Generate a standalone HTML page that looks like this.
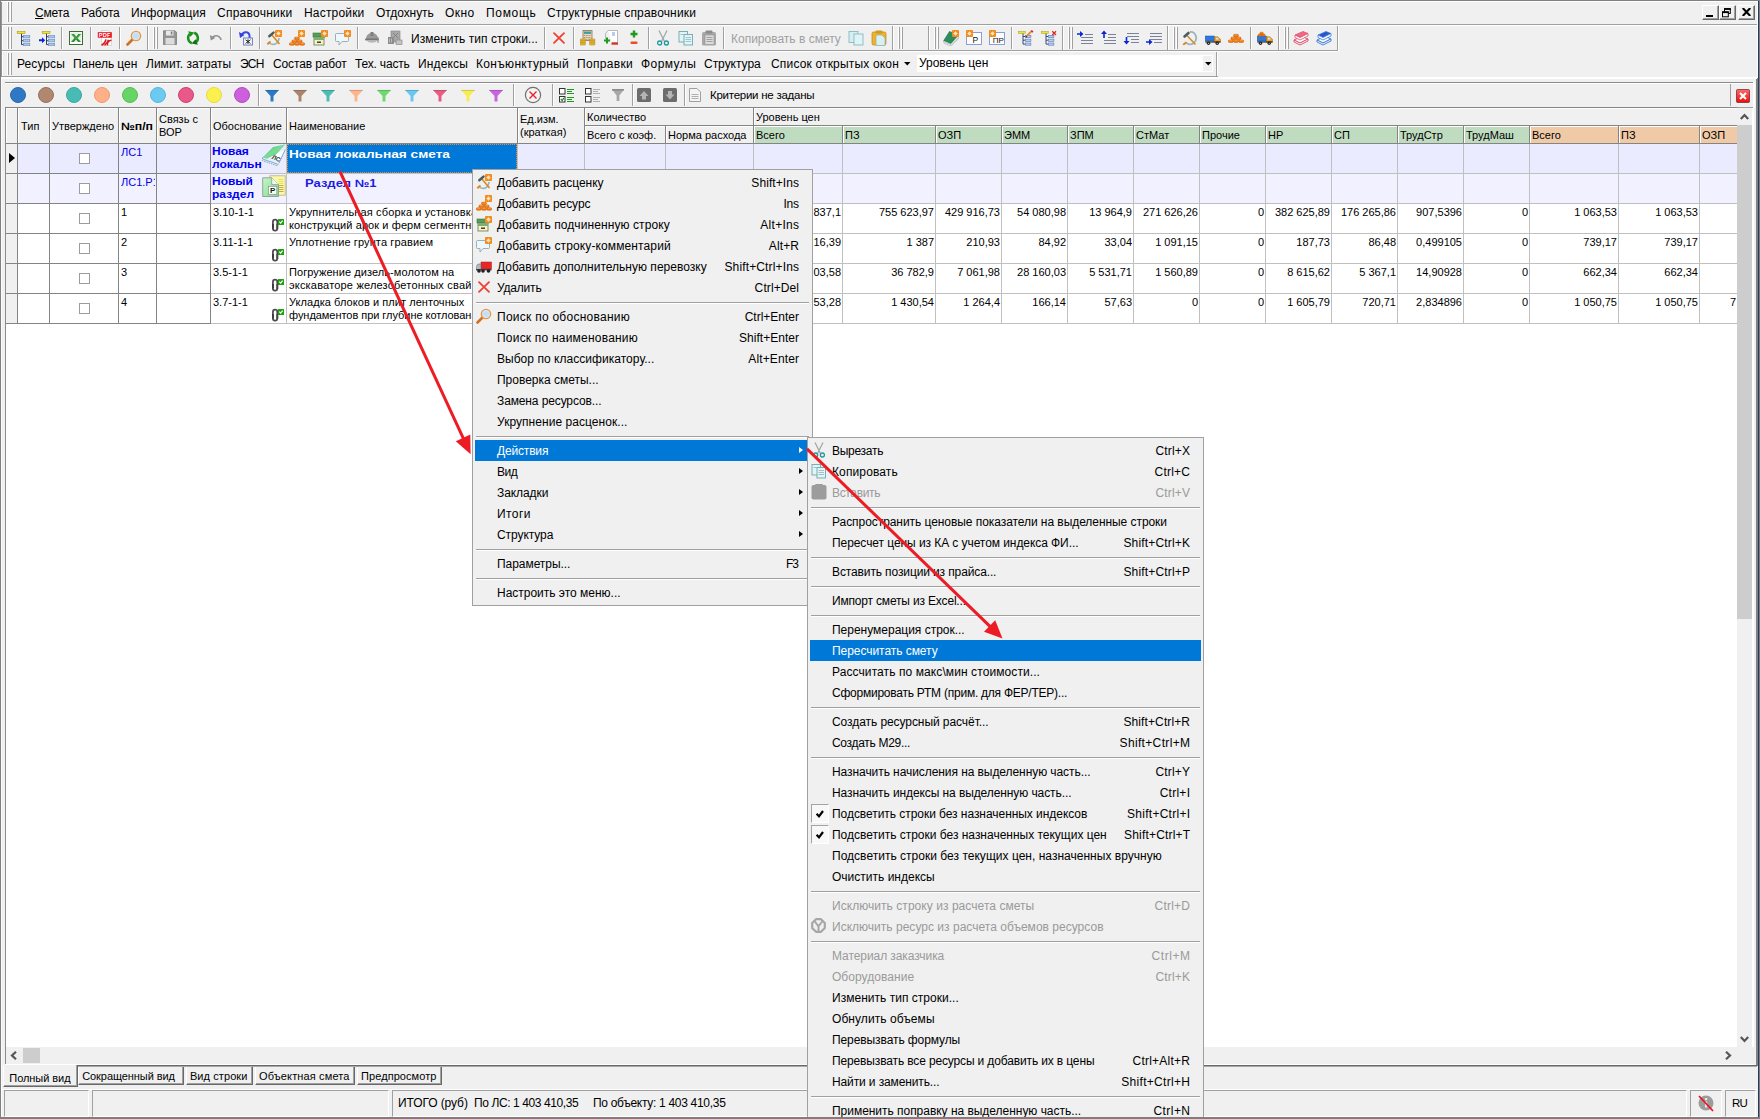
<!DOCTYPE html>
<html lang="ru"><head><meta charset="utf-8"><title>Smeta</title><style>
*{box-sizing:border-box;margin:0;padding:0}
html,body{width:1760px;height:1119px;overflow:hidden;background:#f0f0f0}
body{font-family:"Liberation Sans",sans-serif;font-size:12px;color:#000;position:relative}
.a{position:absolute}
.t{position:absolute;white-space:pre;line-height:14px;font-size:12px}
.g{position:absolute;white-space:pre;line-height:13px;font-size:11px}
.ic{position:absolute;width:16px;height:16px}
.ic svg{display:block}
.grip{position:absolute;width:2px;border-left:1px solid #fff;border-right:1px solid #a0a0a0}
.vsep{position:absolute;width:2px;height:22px;border-left:1px solid #a0a0a0;border-right:1px solid #fff}
.hl{position:absolute;height:1px;background:#a0a0a0}
.vl{position:absolute;width:1px;background:#a0a0a0}
.wbtn{position:absolute;top:5px;width:16px;height:15px;background:#f0f0f0;border:1px solid;border-color:#fff #696969 #696969 #fff;box-shadow:inset -1px -1px 0 #a0a0a0}
.menu{position:absolute;background:#f0f0f0;border:1px solid #a0a0a0}
.mi{position:absolute;left:2px;right:2px;height:21px}
.mi .l{position:absolute;left:22px;top:4px;font-size:12px;line-height:15px;white-space:pre}
.mi .s{position:absolute;right:11px;top:4px;font-size:12px;line-height:15px;white-space:pre}
.mi.sel{background:#0078d7;color:#fff}
.mi.dis{color:#9a9a9a}
.mi .ic{left:1px;top:2px}
.msep{position:absolute;left:3px;right:3px;height:2px;background:#a0a0a0;border-bottom:1px solid #fff}
.arr{position:absolute;right:7px;top:7px;width:0;height:0;border:3.5px solid transparent;border-left:4px solid #000;border-right:0}
.cb{position:absolute;width:11px;height:11px;background:#fff;border:1px solid #9c9c9c}
.num{position:absolute;white-space:pre;line-height:13px;font-size:11px;text-align:right}
.tab{position:absolute;font-size:11px;line-height:13px;text-align:center;border-style:solid;border-width:0 1px 1px 1px;border-color:#696969 #696969 #696969 #fff;box-shadow:inset -1px -1px 0 #a0a0a0;white-space:pre;background:#f0f0f0}
.sp{position:absolute;top:1090px;height:27px;border:1px solid;border-color:#a0a0a0 #fff #fff #a0a0a0}
</style></head><body>
<div class="a" style="left:0;top:0;width:1px;height:1119px;background:#808080"></div><div class="a" style="left:1px;top:0;width:1px;height:1119px;background:#fbfbfb"></div><div class="a" style="left:1px;top:0;width:1px;height:77px;background:#949494"></div><div class="a" style="left:2px;top:25px;width:1px;height:52px;background:#fff"></div><div class="a" style="left:1758px;top:0;width:1px;height:1119px;background:#1f3d66"></div><div class="a" style="left:1759px;top:0;width:1px;height:1119px;background:#7c7c7c"></div><div class="a" style="left:1757px;top:0;width:1px;height:78px;background:#fff"></div><div class="a" style="left:1756px;top:78px;width:2px;height:988px;background:#828282"></div><div class="a" style="left:0;top:0;width:1760px;height:1px;background:#808080"></div><div class="a" style="left:1px;top:1px;width:1757px;height:1px;background:#fff"></div><div class="grip" style="left:7px;top:2px;height:20px"></div><div class="grip" style="left:10px;top:2px;height:20px"></div><div class="t" style="left:35px;top:6px;letter-spacing:-0.23px"><u>С</u>мета</div><div class="t" style="left:81px;top:6px;letter-spacing:-0.16px">Работа</div><div class="t" style="left:131px;top:6px;letter-spacing:0.15px">Информация</div><div class="t" style="left:217px;top:6px;letter-spacing:0.26px">Справочники</div><div class="t" style="left:304px;top:6px;letter-spacing:0.18px">Настройки</div><div class="t" style="left:376px;top:6px;letter-spacing:-0.07px">Отдохнуть</div><div class="t" style="left:445px;top:6px;letter-spacing:0.47px">Окно</div><div class="t" style="left:486px;top:6px;letter-spacing:0.69px">Помощь</div><div class="t" style="left:547px;top:6px;letter-spacing:0.15px">Структурные справочники</div><div class="hl" style="left:2px;top:24px;width:1755px"></div><div class="wbtn" style="left:1702px;width:17px"><div class="a" style="left:3px;top:9px;width:7px;height:2px;background:#000"></div></div><div class="wbtn" style="left:1719px;width:17px"><svg class="a" style="left:1px;top:2px" width="11" height="10" viewBox="0 0 11 10"><rect x="3.500" y=".800" width="5.800" height="4.600" fill="none" stroke="#000" stroke-width="1"/><path d="M3 1h6.800" stroke="#000" stroke-width="1.800"/><rect x="1.500" y="4" width="5.800" height="4.800" fill="#f0f0f0" stroke="#000" stroke-width="1"/><path d="M1 4.200h6.800" stroke="#000" stroke-width="1.800"/></svg></div><div class="wbtn" style="left:1738px;width:17px"><svg class="a" style="left:3px;top:2px" width="9" height="8" viewBox="0 0 9 8"><path d="M.700 0l7.600 8M8.300 0L.700 8" stroke="#000" stroke-width="2.100"/></svg></div><div class="hl" style="left:2px;top:25px;width:1755px;background:#fff"></div><div class="grip" style="left:7px;top:27px;height:22px"></div><div class="grip" style="left:10px;top:27px;height:22px"></div><div class="ic" style="left:16px;top:30px"><svg width="16" height="16" viewBox="0 0 16 16"><rect x="1.200" y="1.300" width="7.800" height="2.300" fill="#f2e428" stroke="#a89c28" stroke-width=".6"/><path d="M5.500 3.800v10.800h2M5.500 6.700h2M5.500 10.700h2" stroke="#2a3c6c" stroke-width="1" fill="none"/><rect x="7.5" y="5.5" width="6.300" height="2.400" fill="#a8c8f0" stroke="#6a88b8" stroke-width=".6"/><rect x="7.5" y="9.5" width="6.300" height="2.400" fill="#a8c8f0" stroke="#6a88b8" stroke-width=".6"/><rect x="7.5" y="13.4" width="6.300" height="2.400" fill="#a8c8f0" stroke="#6a88b8" stroke-width=".6"/></svg></div><div class="ic" style="left:39px;top:30px"><svg width="16" height="16" viewBox="0 0 16 16"><rect x="3.200" y="1.300" width="7.800" height="2.300" fill="#f2e428" stroke="#a89c28" stroke-width=".6"/><path d="M7.500 3.800v10.800h2M7.500 6.700h2M7.500 10.700h2" stroke="#2a3c6c" stroke-width="1" fill="none"/><rect x="9.4" y="5.5" width="6.300" height="2.400" fill="#a8c8f0" stroke="#6a88b8" stroke-width=".6"/><rect x="9.4" y="9.5" width="6.300" height="2.400" fill="#a8c8f0" stroke="#6a88b8" stroke-width=".6"/><rect x="9.4" y="13.4" width="6.300" height="2.400" fill="#a8c8f0" stroke="#6a88b8" stroke-width=".6"/><path d="M0 9.300h3V7.300l3.200 3-3.200 3v-2H0z" fill="#0828e0"/></svg></div><div class="vsep" style="left:61px;top:27px"></div><div class="ic" style="left:68px;top:30px"><svg width="16" height="16" viewBox="0 0 16 16"><rect x="1.500" y="1.500" width="13" height="13" fill="#fff" stroke="#3c6c34" stroke-width="1"/><rect x="2.500" y="2.500" width="11" height="9.500" fill="#e4f0e0"/><path d="M3.200 4l2.800 0L8.200 6.800 10.400 4h2.800L9.600 8.200 13 12H10.200L8 9.500 5.800 12H3l3.500-3.900z" fill="#2c8c34"/><path d="M4 4.400l4.200 4.400L12.600 4" stroke="#7cc47c" stroke-width=".6" fill="none"/></svg></div><div class="vsep" style="left:90px;top:27px"></div><div class="ic" style="left:97px;top:30px"><svg width="16" height="16" viewBox="0 0 16 16"><path d="M4.500.500h6.500l3.500 3V15.500H4.500z" fill="#fff" stroke="#c4c4c4" stroke-width=".6"/><rect x=".8" y="2.200" width="14" height="5.500" fill="#e8101c"/><text x="7.800" y="6.900" font-family="Liberation Sans" font-size="5.600" font-weight="bold" fill="#fff" text-anchor="middle" letter-spacing=".3">PDF</text><path d="M4.500 15.300c2.500-1.500 4-3.500 4.500-6M7.500 15.300c2-1.300 3.300-3.300 4-5.500M10.500 15.300c-.5-2.500 1.500-5 4-5" stroke="#e01820" stroke-width="1.500" fill="none"/></svg></div><div class="vsep" style="left:119px;top:27px"></div><div class="ic" style="left:126px;top:30px"><svg width="16" height="16" viewBox="0 0 16 16"><path d="M1.5 14.5L7 9" stroke="#d07020" stroke-width="2.6" stroke-linecap="round"/><circle cx="10" cy="6" r="4.6" fill="#d8ecff" stroke="#e8963c" stroke-width="1.4"/><circle cx="10" cy="6" r="3" fill="#b8d8f8" opacity=".7"/></svg></div><div class="a" style="left:147px;top:26px;width:2px;height:25px;border-left:1px solid #a0a0a0;border-right:1px solid #fff"></div><div class="grip" style="left:153px;top:27px;height:22px"></div><div class="grip" style="left:156px;top:27px;height:22px"></div><div class="ic" style="left:162px;top:30px"><svg width="16" height="16" viewBox="0 0 16 16"><path d="M1.500.800h11.500l1.500 1.500v12.200h-13z" fill="#949494" stroke="#7c7c7c" stroke-width=".8"/><rect x="4" y=".800" width="7.500" height="4.700" fill="#e8e8e8"/><rect x="8.800" y="1.500" width="1.600" height="3" fill="#7c7c7c"/><rect x="3.500" y="8" width="9" height="6.500" fill="#dcdcdc"/></svg></div><div class="ic" style="left:185px;top:30px"><svg width="16" height="16" viewBox="0 0 16 16"><path d="M6.800 13.200A5.300 5.600 0 0 1 4.600 4" stroke="#1c901c" stroke-width="2.500" fill="none"/><path d="M3.200 1.200l6.200 1.200-4 4.400z" fill="#1c901c"/><path d="M9.200 2.800A5.300 5.600 0 0 1 11.400 12" stroke="#1c901c" stroke-width="2.500" fill="none"/><path d="M12.800 14.800l-6.200-1.200 4-4.400z" fill="#107010"/></svg></div><div class="ic" style="left:208px;top:30px"><svg width="16" height="16" viewBox="0 0 16 16"><path d="M4 8.500C6 4.800 11 4.500 13.200 9.800" stroke="#909090" stroke-width="1.700" fill="none"/><path d="M1.800 5l1 5.500 4.500-2.500z" fill="#909090"/></svg></div><div class="vsep" style="left:230px;top:27px"></div><div class="ic" style="left:237px;top:30px"><svg width="16" height="16" viewBox="0 0 16 16"><path d="M4.500 5.500C6.500 .500 13.500 1 12.500 8" stroke="#3848e8" stroke-width="2" fill="none"/><path d="M2 2l1 6 4.500-3z" fill="#3040e0"/><rect x="6.600" y="8" width="8.800" height="7" fill="#fff" stroke="#6a78c0"/><path d="M8.500 9.800l5 3.600M13.500 9.800l-5 3.600M11 9.300v4.600" stroke="#111" stroke-width=".9"/></svg></div><div class="vsep" style="left:259px;top:27px"></div><div class="ic" style="left:266px;top:30px"><svg width="16" height="16" viewBox="0 0 16 16"><path d="M3.500 13c3 2.800 9 1.500 9.500-5" stroke="#98b4bc" stroke-width="1.700" fill="none"/><path d="M1.300 14.200l3.200-2.700" stroke="#d88828" stroke-width="2"/><path d="M5.500 4.500l8 9.500" stroke="#d88828" stroke-width="1.600"/><path d="M3.300 6.200l4.200-3.600" stroke="#4c5c60" stroke-width="2.500" stroke-linecap="round"/><rect x="9" y="0" width="7" height="7" rx="1" fill="#f08a1c"/><circle cx="12.5" cy="3.5" r="1.3" fill="#fff"/><path d="M12.5 .8v5.4M9.8 3.5h5.4M10.6 1.6l3.8 3.8M14.4 1.6l-3.8 3.8" stroke="#ffe0b0" stroke-width=".5"/></svg></div><div class="ic" style="left:289px;top:30px"><svg width="16" height="16" viewBox="0 0 16 16"><g fill="#f47c0c" stroke="#c05000" stroke-width=".45"><rect x=".3" y="12.700" width="5" height="2.600" rx="1.200"/><rect x="5.500" y="12.700" width="5" height="2.600" rx="1.200"/><rect x="10.700" y="12.700" width="5" height="2.600" rx="1.200"/><rect x="2.900" y="9.900" width="5" height="2.600" rx="1.200"/><rect x="8.100" y="9.900" width="5" height="2.600" rx="1.200"/><rect x="5.500" y="7.100" width="5" height="2.600" rx="1.200"/></g><path d="M1.300 13.400h3M6.500 13.400h3M11.700 13.400h3M3.900 10.600h3M9.100 10.600h3M6.500 7.800h3" stroke="#ffb060" stroke-width=".6"/><rect x="9" y="0" width="7" height="7" rx="1" fill="#f08a1c"/><circle cx="12.5" cy="3.5" r="1.3" fill="#fff"/><path d="M12.5 .8v5.4M9.8 3.5h5.4M10.6 1.6l3.8 3.8M14.4 1.6l-3.8 3.8" stroke="#ffe0b0" stroke-width=".5"/></svg></div><div class="ic" style="left:312px;top:30px"><svg width="16" height="16" viewBox="0 0 16 16"><rect x="1" y="3" width="12" height="4" fill="#5a9a5a" stroke="#3a7a3a" stroke-width=".6"/><rect x="2" y="7" width="10" height="8" fill="#fbf2c0" stroke="#5a7a4a" stroke-width=".8"/><rect x="2" y="7" width="10" height="3" fill="#78b078"/><rect x="5" y="11.5" width="4" height="1.4" fill="#333"/><rect x="9" y="0" width="7" height="7" rx="1" fill="#f08a1c"/><circle cx="12.5" cy="3.5" r="1.3" fill="#fff"/><path d="M12.5 .8v5.4M9.8 3.5h5.4M10.6 1.6l3.8 3.8M14.4 1.6l-3.8 3.8" stroke="#ffe0b0" stroke-width=".5"/></svg></div><div class="ic" style="left:335px;top:30px"><svg width="16" height="16" viewBox="0 0 16 16"><path d="M1.5 3.5h11a1 1 0 0 1 1 1v6a1 1 0 0 1-1 1H7l-3 3.5v-3.5H1.5a1 1 0 0 1-1-1v-6a1 1 0 0 1 1-1z" fill="#eef8fc" stroke="#90a8b0" stroke-width=".9"/><rect x="9" y="0" width="7" height="7" rx="1" fill="#f08a1c"/><circle cx="12.5" cy="3.5" r="1.3" fill="#fff"/><path d="M12.5 .8v5.4M9.8 3.5h5.4M10.6 1.6l3.8 3.8M14.4 1.6l-3.8 3.8" stroke="#ffe0b0" stroke-width=".5"/></svg></div><div class="vsep" style="left:357px;top:27px"></div><div class="ic" style="left:364px;top:30px"><svg width="16" height="16" viewBox="0 0 16 16"><path d="M2 9c0-4 3-6 6-6s6 2 6 6z" fill="#9a9a9a"/><rect x="1" y="8.5" width="14" height="2" rx="1" fill="#777"/><path d="M3 10.5c1 3 9 3 10 0" fill="#b8b8b8"/><rect x="6.5" y="2" width="3" height="4" fill="#808080"/><path d="M14 7v6" stroke="#888"/></svg></div><div class="ic" style="left:387px;top:30px"><svg width="16" height="16" viewBox="0 0 16 16"><rect x="4" y="1" width="9" height="11" fill="#a8a8a8" stroke="#808080" stroke-width=".6"/><path d="M6 3l5 5M11 3l-5 5" stroke="#7a7a7a" stroke-width=".8"/><rect x="1" y="7" width="6" height="7" fill="#8c8c8c"/><rect x="9" y="10" width="6" height="4.5" fill="#c4c4c4" stroke="#808080" stroke-width=".6"/><path d="M2.5 8.5v4M4.5 8.5v4" stroke="#c8c8c8" stroke-width=".8"/></svg></div><div class="t" style="left:411px;top:32px;letter-spacing:0.03px">Изменить тип строки...</div><div class="vsep" style="left:544px;top:27px"></div><div class="ic" style="left:551px;top:30px"><svg width="16" height="16" viewBox="0 0 16 16"><path d="M3 3.200l10 9.600M13 3.200L3 12.800" stroke="#f04030" stroke-width="1.800" stroke-linecap="round"/></svg></div><div class="vsep" style="left:573px;top:27px"></div><div class="ic" style="left:580px;top:30px"><svg width="16" height="16" viewBox="0 0 16 16"><rect x="3" y="0.5" width="9" height="10" fill="#e8d8c0" stroke="#806040" stroke-width=".7"/><rect x="4" y="1.5" width="7" height="2.4" fill="#38a0a0"/><path d="M4 5.5h7M4 7.5h7M4 9.3h7" stroke="#a08060" stroke-width=".8" stroke-dasharray="1.4 .8"/><g fill="#f0c030" stroke="#a07810" stroke-width=".5"><rect x="0" y="9" width="5.5" height="2" rx=".8"/><rect x="0" y="11" width="5.5" height="2" rx=".8"/><rect x="0" y="13" width="5.5" height="2" rx=".8"/><rect x="9.5" y="9" width="5.5" height="2" rx=".8"/><rect x="9.5" y="11" width="5.5" height="2" rx=".8"/><rect x="9.5" y="13" width="5.5" height="2" rx=".8"/></g></svg></div><div class="ic" style="left:603px;top:30px"><svg width="16" height="16" viewBox="0 0 16 16"><path d="M5 .5h9.5v12H9" fill="#fff" stroke="#a8a8a8" stroke-width=".8"/><path d="M5 .5L2.5 3.5V9" fill="none" stroke="#a8a8a8" stroke-width=".8"/><path d="M9 3h3M9 5h3" stroke="#6a8ad0" stroke-width=".9"/><path d="M1 10.5h6M4 7.5v6" stroke="#1e9a1e" stroke-width="2"/><rect x="8.5" y="12.5" width="6.5" height="2.2" fill="#e03020"/></svg></div><div class="ic" style="left:626px;top:30px"><svg width="16" height="16" viewBox="0 0 16 16"><path d="M4.5 4h7M8 .5v7" stroke="#1e9a1e" stroke-width="2.4"/><rect x="4.5" y="11.5" width="7" height="2.6" rx="1" fill="#f04828"/></svg></div><div class="vsep" style="left:648px;top:27px"></div><div class="ic" style="left:655px;top:30px"><svg width="16" height="16" viewBox="0 0 16 16"><path d="M4 .5l5.5 11M12 .5L6.5 11.5" stroke="#a0a8a8" stroke-width="1.3"/><circle cx="4.6" cy="13" r="2" fill="none" stroke="#1a9aa0" stroke-width="1.3"/><circle cx="11.4" cy="13" r="2" fill="none" stroke="#1a9aa0" stroke-width="1.3"/></svg></div><div class="ic" style="left:678px;top:30px"><svg width="16" height="16" viewBox="0 0 16 16"><rect x="1" y="1.5" width="8.5" height="10.5" fill="#e4f4f6" stroke="#6aa8b0" stroke-width=".9"/><rect x="6" y="4.5" width="8.5" height="10.5" fill="#e4f4f6" stroke="#6aa8b0" stroke-width=".9"/><path d="M7.5 7.5h5.5M7.5 9.5h5.5M7.5 11.5h5.5M2.5 4.5h3" stroke="#8ab8c0" stroke-width=".8"/></svg></div><div class="ic" style="left:701px;top:30px"><svg width="16" height="16" viewBox="0 0 16 16"><rect x="1" y="2" width="14" height="13.5" rx="1.5" fill="#a8a8a8"/><rect x="4.5" y=".5" width="7" height="3" rx="1" fill="#8c8c8c"/><rect x="4" y="5" width="9" height="9.5" fill="#dcdcdc" stroke="#909090" stroke-width=".6"/><path d="M5.5 7.5h6M5.5 9.5h6M5.5 11.5h6" stroke="#909090" stroke-width=".8"/></svg></div><div class="vsep" style="left:723px;top:27px"></div><div class="t" style="left:731px;top:32px;color:#a0a0a0;letter-spacing:-0.0px">Копировать в смету</div><div class="ic" style="left:848px;top:30px"><svg width="16" height="16" viewBox="0 0 16 16"><rect x="1" y="1.5" width="9" height="11" fill="#d4eef2" stroke="#88b8c0" stroke-width=".9"/><rect x="6" y="4" width="9" height="11" fill="#e0f4f6" stroke="#88b8c0" stroke-width=".9"/></svg></div><div class="ic" style="left:871px;top:30px"><svg width="16" height="16" viewBox="0 0 16 16"><rect x="1" y="2" width="14" height="13" rx="1.5" fill="#f0b428" stroke="#c08810" stroke-width=".7"/><rect x="4.5" y=".5" width="7" height="3" rx="1" fill="#d89818"/><path d="M5 5h6l3 3v7.5H5z" fill="#d8f0f2" stroke="#88b0b8" stroke-width=".7"/></svg></div><div class="a" style="left:892px;top:26px;width:2px;height:25px;border-left:1px solid #a0a0a0;border-right:1px solid #fff"></div><div class="grip" style="left:898px;top:27px;height:22px"></div><div class="grip" style="left:901px;top:27px;height:22px"></div><div class="a" style="left:928px;top:26px;width:2px;height:25px;border-left:1px solid #a0a0a0;border-right:1px solid #fff"></div><div class="grip" style="left:934px;top:27px;height:22px"></div><div class="grip" style="left:937px;top:27px;height:22px"></div><div class="ic" style="left:943px;top:30px"><svg width="16" height="16" viewBox="0 0 16 16"><path d="M.800 10.500v2.500l7 3 7.500-7V6.500z" fill="#e8ecec" stroke="#98a8a8" stroke-width=".6"/><path d="M.800 10.500L6.500 1.500l8.800 3.500-7.500 8.500z" fill="#2c8c5c" stroke="#1c6c44" stroke-width=".6"/><path d="M1.500 11.800l6.300 2.700 7-6.500" stroke="#b0bcbc" stroke-width=".7" fill="none"/><rect x="9" y="0" width="7" height="7" rx="1" fill="#f08a1c"/><circle cx="12.5" cy="3.5" r="1.3" fill="#fff"/><path d="M12.5 .8v5.4M9.8 3.5h5.4M10.6 1.6l3.8 3.8M14.4 1.6l-3.8 3.8" stroke="#ffe0b0" stroke-width=".5"/></svg></div><div class="ic" style="left:966px;top:30px"><svg width="16" height="16" viewBox="0 0 16 16"><rect x=".500" y="2.500" width="15" height="12" fill="#fff" stroke="#7c94d0" stroke-width=".9"/><text x="9.300" y="13.300" font-family="Liberation Sans" font-size="8.5" text-anchor="middle" fill="#111">Р</text><rect x="0" y="0" width="7" height="7" rx="1" fill="#f08a1c"/><circle cx="3.500" cy="3.500" r="1.300" fill="#fff"/><path d="M3.500 .8v5.400M.8 3.500h5.400M1.600 1.600l3.800 3.800M5.400 1.600L1.600 5.400" stroke="#ffe0b0" stroke-width=".5"/></svg></div><div class="ic" style="left:989px;top:30px"><svg width="16" height="16" viewBox="0 0 16 16"><rect x=".500" y="2.500" width="15" height="12" fill="#fff" stroke="#7c94d0" stroke-width=".9"/><text x="9.300" y="13.300" font-family="Liberation Sans" font-size="8" text-anchor="middle" fill="#111">ПР</text><rect x="0" y="0" width="7" height="7" rx="1" fill="#f08a1c"/><circle cx="3.500" cy="3.500" r="1.300" fill="#fff"/><path d="M3.500 .8v5.400M.8 3.500h5.400M1.600 1.600l3.800 3.800M5.400 1.600L1.600 5.400" stroke="#ffe0b0" stroke-width=".5"/></svg></div><div class="vsep" style="left:1011px;top:27px"></div><div class="ic" style="left:1018px;top:30px"><svg width="16" height="16" viewBox="0 0 16 16"><rect x=".3" y="1.400" width="7" height="2" fill="#f2e428" stroke="#a89c28" stroke-width=".5"/><path d="M5 3.600v10.500h2.300M5 6.500h2.300M5 10.200h2.300" stroke="#223a6a" fill="none" stroke-width=".9"/><rect x="7.300" y="5.4" width="5.600" height="2.200" fill="#b4ccf0" stroke="#5a78b0" stroke-width=".6"/><rect x="7.300" y="9.1" width="5.600" height="2.200" fill="#b4ccf0" stroke="#5a78b0" stroke-width=".6"/><rect x="7.300" y="13" width="5.600" height="2.200" fill="#b4ccf0" stroke="#5a78b0" stroke-width=".6"/><path d="M8.800 6L13.600 1.200" stroke="#e88830" stroke-width="1.800"/><path d="M13.300 .5l1.600 1.600" stroke="#e02020" stroke-width="1.500"/><path d="M7.500 7.500l.4-1.900 1.500 1.500z" fill="#222"/></svg></div><div class="ic" style="left:1041px;top:30px"><svg width="16" height="16" viewBox="0 0 16 16"><rect x=".3" y="1.400" width="7" height="2" fill="#f2e428" stroke="#a89c28" stroke-width=".5"/><path d="M5 3.600v10.500h2.300M5 6.500h2.300M5 10.200h2.300" stroke="#223a6a" fill="none" stroke-width=".9"/><rect x="7.300" y="5.4" width="5.600" height="2.200" fill="#b4ccf0" stroke="#5a78b0" stroke-width=".6"/><rect x="7.300" y="9.1" width="5.600" height="2.200" fill="#b4ccf0" stroke="#5a78b0" stroke-width=".6"/><rect x="7.300" y="13" width="5.600" height="2.200" fill="#b4ccf0" stroke="#5a78b0" stroke-width=".6"/><path d="M11.300 1.300l3.700 3.700M15 1.300l-3.700 3.700" stroke="#e82020" stroke-width="1.300"/></svg></div><div class="a" style="left:1062px;top:26px;width:2px;height:25px;border-left:1px solid #a0a0a0;border-right:1px solid #fff"></div><div class="grip" style="left:1068px;top:27px;height:22px"></div><div class="grip" style="left:1071px;top:27px;height:22px"></div><div class="ic" style="left:1077px;top:30px"><svg width="16" height="16" viewBox="0 0 16 16"><path d="M4 7.5h12M4 10.5h12M4 13.5h12M8 4.5h8" stroke="#6c7690" stroke-width=".9"/><path d="M0 3.2h3V1l3.5 3-3.5 3V4.8H0z" fill="#0a28d0"/></svg></div><div class="ic" style="left:1100px;top:30px"><svg width="16" height="16" viewBox="0 0 16 16"><path d="M8 4.5h8M8 7.5h8M4 10.5h12M4 13.5h12" stroke="#6c7690" stroke-width=".9"/><path d="M3.2 8V4H1l3-3.5 3 3.5H4.8v4z" fill="#0a28d0"/></svg></div><div class="ic" style="left:1123px;top:30px"><svg width="16" height="16" viewBox="0 0 16 16"><path d="M4 3.5h12M4 6.5h12M8 9.5h8M8 12.5h8" stroke="#6c7690" stroke-width=".9"/><path d="M2.7 7v4H.5l3 3.5 3-3.5H4.3V7z" fill="#0a28d0"/></svg></div><div class="ic" style="left:1146px;top:30px"><svg width="16" height="16" viewBox="0 0 16 16"><path d="M4 3.5h12M4 6.5h12M4 9.5h12M8 12.5h8" stroke="#6c7690" stroke-width=".9"/><path d="M0 11.2h3V9l3.5 3-3.5 3v-2.2H0z" fill="#0a28d0"/></svg></div><div class="a" style="left:1167px;top:26px;width:2px;height:25px;border-left:1px solid #a0a0a0;border-right:1px solid #fff"></div><div class="grip" style="left:1173px;top:27px;height:22px"></div><div class="grip" style="left:1176px;top:27px;height:22px"></div><div class="ic" style="left:1182px;top:30px"><svg width="16" height="16" viewBox="0 0 16 16"><path d="M8 2C14 1.500 16.500 9.500 11.500 13.200 8.500 15.200 5.500 14.200 4.500 12.800" stroke="#98b4bc" stroke-width="1.800" fill="none"/><path d="M1.200 14.800l3.300-2.600" stroke="#d88828" stroke-width="2"/><path d="M4.500 5l9 9.500" stroke="#d88828" stroke-width="1.600"/><path d="M2.500 6.500l4-3.500" stroke="#4c5c60" stroke-width="2.600" stroke-linecap="round"/></svg></div><div class="ic" style="left:1205px;top:30px"><svg width="16" height="16" viewBox="0 0 16 16"><rect x=".3" y="6" width="9.200" height="5" fill="#2a78e0" stroke="#1a50a8" stroke-width=".5"/><path d="M9.500 6.800h3.300l2.700 2.500v2.900h-6z" fill="#f0a020" stroke="#a06810" stroke-width=".5"/><rect x="11" y="7.800" width="2.300" height="1.700" fill="#cfe8ff"/><rect x=".3" y="11.300" width="15.200" height="1.300" fill="#333"/><circle cx="3.500" cy="13.300" r="1.700" fill="#222"/><circle cx="12.200" cy="13.300" r="1.700" fill="#222"/><circle cx="3.500" cy="13.300" r=".6" fill="#ccc"/><circle cx="12.200" cy="13.300" r=".6" fill="#ccc"/></svg></div><div class="ic" style="left:1228px;top:30px"><svg width="16" height="16" viewBox="0 0 16 16"><g transform="translate(0 -2.800)"><g fill="#f47c0c" stroke="#c05000" stroke-width=".45"><rect x=".3" y="12.700" width="5" height="2.600" rx="1.200"/><rect x="5.500" y="12.700" width="5" height="2.600" rx="1.200"/><rect x="10.700" y="12.700" width="5" height="2.600" rx="1.200"/><rect x="2.900" y="9.900" width="5" height="2.600" rx="1.200"/><rect x="8.100" y="9.900" width="5" height="2.600" rx="1.200"/><rect x="5.500" y="7.100" width="5" height="2.600" rx="1.200"/></g><path d="M1.300 13.400h3M6.500 13.400h3M11.700 13.400h3M3.900 10.600h3M9.100 10.600h3M6.500 7.800h3" stroke="#ffb060" stroke-width=".6"/></g></svg></div><div class="vsep" style="left:1250px;top:27px"></div><div class="ic" style="left:1257px;top:30px"><svg width="16" height="16" viewBox="0 0 16 16"><rect x=".3" y="6" width="9.200" height="5" fill="#2a78e0" stroke="#1a50a8" stroke-width=".5"/><path d="M9.500 6.800h3.300l2.700 2.500v2.900h-6z" fill="#f0a020" stroke="#a06810" stroke-width=".5"/><rect x="11" y="7.800" width="2.300" height="1.700" fill="#cfe8ff"/><rect x=".3" y="11.300" width="15.200" height="1.300" fill="#333"/><circle cx="3.500" cy="13.300" r="1.700" fill="#222"/><circle cx="12.200" cy="13.300" r="1.700" fill="#222"/><circle cx="3.500" cy="13.300" r=".6" fill="#ccc"/><circle cx="12.200" cy="13.300" r=".6" fill="#ccc"/><g fill="#f07800" stroke="#c85a00" stroke-width=".4"><rect x="1" y="4" width="3.600" height="2.200" rx="1"/><rect x="4.600" y="4" width="3.600" height="2.200" rx="1"/><rect x="2.800" y="2.200" width="3.600" height="2.200" rx="1"/></g></svg></div><div class="a" style="left:1278px;top:26px;width:2px;height:25px;border-left:1px solid #a0a0a0;border-right:1px solid #fff"></div><div class="grip" style="left:1284px;top:27px;height:22px"></div><div class="grip" style="left:1287px;top:27px;height:22px"></div><div class="ic" style="left:1293px;top:30px"><svg width="16" height="16" viewBox="0 0 16 16"><path d="M1 10l8-3.5 6 2.5-8 4z" fill="#fff" stroke="#e04868" stroke-width=".9"/><path d="M1 10v2l6 3 8-4v-2l-8 4z" fill="#f4f4f4" stroke="#e04868" stroke-width=".9"/><path d="M2 5l8-3.5L15 3.5 7 7.5z" fill="#f06888" stroke="#e04868" stroke-width=".7"/><path d="M2 5v2.5l5 2.5 8-4V3.5l-8 4z" fill="#fff" stroke="#e04868" stroke-width=".8"/></svg></div><div class="ic" style="left:1316px;top:30px"><svg width="16" height="16" viewBox="0 0 16 16"><path d="M1 10l8-3.5 6 2.5-8 4z" fill="#fff" stroke="#3a78d8" stroke-width=".9"/><path d="M1 10v2l6 3 8-4v-2l-8 4z" fill="#f4f4f4" stroke="#3a78d8" stroke-width=".9"/><path d="M2 5l8-3.5L15 3.5 7 7.5z" fill="#2858c8" stroke="#3a78d8" stroke-width=".7"/><path d="M2 5v2.5l5 2.5 8-4V3.5l-8 4z" fill="#fff" stroke="#3a78d8" stroke-width=".8"/></svg></div><div class="a" style="left:1337px;top:26px;width:2px;height:25px;border-left:1px solid #a0a0a0;border-right:1px solid #fff"></div><div class="hl" style="left:2px;top:50px;width:1336px"></div><div class="hl" style="left:2px;top:51px;width:1336px;background:#fff"></div><div class="grip" style="left:7px;top:53px;height:22px"></div><div class="grip" style="left:10px;top:53px;height:22px"></div><div class="t" style="left:17px;top:57px;letter-spacing:0.08px">Ресурсы</div><div class="t" style="left:73px;top:57px;letter-spacing:-0.06px">Панель цен</div><div class="t" style="left:146px;top:57px;letter-spacing:0.02px">Лимит. затраты</div><div class="t" style="left:240px;top:57px;letter-spacing:-0.83px">ЭСН</div><div class="t" style="left:273px;top:57px;letter-spacing:-0.13px">Состав работ</div><div class="t" style="left:355px;top:57px;letter-spacing:-0.18px">Тех. часть</div><div class="t" style="left:418px;top:57px;letter-spacing:0.14px">Индексы</div><div class="t" style="left:476px;top:57px;letter-spacing:0.32px">Конъюнктурный</div><div class="t" style="left:577px;top:57px;letter-spacing:0.33px">Поправки</div><div class="t" style="left:641px;top:57px;letter-spacing:0.43px">Формулы</div><div class="t" style="left:704px;top:57px;letter-spacing:-0.02px">Структура</div><div class="t" style="left:771px;top:57px;letter-spacing:0.17px">Список открытых окон</div><svg class="a" style="left:904px;top:62px" width="7" height="4" viewBox="0 0 7 4"><path d="M0 0h6.500L3.250 3.600z" fill="#000"/></svg><div class="a" style="left:917px;top:55px;width:296px;height:17px;background:#fff"></div><div class="t" style="left:919px;top:56px;letter-spacing:-0.03px">Уровень цен</div><div class="a" style="left:1203px;top:56px;width:9px;height:15px;background:#f0f0f0"></div><svg class="a" style="left:1204.5px;top:62px" width="7" height="4" viewBox="0 0 7 4"><path d="M0 0h6.500L3.250 3.600z" fill="#000"/></svg><div class="a" style="left:1216px;top:52px;width:2px;height:24px;border-left:1px solid #a0a0a0;border-right:1px solid #fff"></div><div class="hl" style="left:2px;top:76px;width:1216px"></div><div class="hl" style="left:2px;top:77px;width:1755px;background:#fff"></div><div class="hl" style="left:2px;top:78px;width:1755px;background:#fff"></div><div class="a" style="left:2px;top:79px;width:1754px;height:3px;background:#f0f0f0"></div><div class="hl" style="left:5px;top:82px;width:1748px;background:#8c8c8c"></div><div class="hl" style="left:5px;top:83px;width:1748px;background:#fff"></div><div class="hl" style="left:5px;top:107px;width:1748px"></div><div class="a" style="left:1753px;top:82px;width:2px;height:26px;background:#fff"></div><div class="a" style="left:10px;top:87px;width:16px;height:16px;border-radius:50%;background:#2f78c4;border:1px solid #2868b0"></div><div class="a" style="left:38px;top:87px;width:16px;height:16px;border-radius:50%;background:#b08870;border:1px solid #98705c"></div><div class="a" style="left:66px;top:87px;width:16px;height:16px;border-radius:50%;background:#48bcb4;border:1px solid #38a8a0"></div><div class="a" style="left:94px;top:87px;width:16px;height:16px;border-radius:50%;background:#ffb088;border:1px solid #f09870"></div><div class="a" style="left:122px;top:87px;width:16px;height:16px;border-radius:50%;background:#68d468;border:1px solid #50c050"></div><div class="a" style="left:150px;top:87px;width:16px;height:16px;border-radius:50%;background:#6ccaf0;border:1px solid #54b8e0"></div><div class="a" style="left:178px;top:87px;width:16px;height:16px;border-radius:50%;background:#e85888;border:1px solid #d04070"></div><div class="a" style="left:206px;top:87px;width:16px;height:16px;border-radius:50%;background:#fcf050;border:1px solid #e8dc38"></div><div class="a" style="left:234px;top:87px;width:16px;height:16px;border-radius:50%;background:#cc60dc;border:1px solid #b848c8"></div><div class="vsep" style="left:258px;top:84px"></div><svg class="a" style="left:264px;top:87px" width="16" height="16" viewBox="0 0 16 16"><path d="M1 3h14L9.500 9v5.500h-3V9z" fill="#2c78c4"/><path d="M1 3.400h14" stroke="#000" stroke-opacity=".18" stroke-width=".9"/></svg><svg class="a" style="left:292px;top:87px" width="16" height="16" viewBox="0 0 16 16"><path d="M1 3h14L9.500 9v5.500h-3V9z" fill="#ac846c"/><path d="M1 3.400h14" stroke="#000" stroke-opacity=".18" stroke-width=".9"/></svg><svg class="a" style="left:320px;top:87px" width="16" height="16" viewBox="0 0 16 16"><path d="M1 3h14L9.500 9v5.500h-3V9z" fill="#4cbcb4"/><path d="M1 3.400h14" stroke="#000" stroke-opacity=".18" stroke-width=".9"/></svg><svg class="a" style="left:348px;top:87px" width="16" height="16" viewBox="0 0 16 16"><path d="M1 3h14L9.500 9v5.500h-3V9z" fill="#ffb48c"/><path d="M1 3.400h14" stroke="#000" stroke-opacity=".18" stroke-width=".9"/></svg><svg class="a" style="left:376px;top:87px" width="16" height="16" viewBox="0 0 16 16"><path d="M1 3h14L9.500 9v5.500h-3V9z" fill="#70d870"/><path d="M1 3.400h14" stroke="#000" stroke-opacity=".18" stroke-width=".9"/></svg><svg class="a" style="left:404px;top:87px" width="16" height="16" viewBox="0 0 16 16"><path d="M1 3h14L9.500 9v5.500h-3V9z" fill="#68c8f0"/><path d="M1 3.400h14" stroke="#000" stroke-opacity=".18" stroke-width=".9"/></svg><svg class="a" style="left:432px;top:87px" width="16" height="16" viewBox="0 0 16 16"><path d="M1 3h14L9.500 9v5.500h-3V9z" fill="#e85c84"/><path d="M1 3.400h14" stroke="#000" stroke-opacity=".18" stroke-width=".9"/></svg><svg class="a" style="left:460px;top:87px" width="16" height="16" viewBox="0 0 16 16"><path d="M1 3h14L9.500 9v5.500h-3V9z" fill="#f8ec50"/><path d="M1 3.400h14" stroke="#000" stroke-opacity=".18" stroke-width=".9"/></svg><svg class="a" style="left:488px;top:87px" width="16" height="16" viewBox="0 0 16 16"><path d="M1 3h14L9.500 9v5.500h-3V9z" fill="#c864e0"/><path d="M1 3.400h14" stroke="#000" stroke-opacity=".18" stroke-width=".9"/></svg><div class="vsep" style="left:513px;top:84px"></div><svg class="a" style="left:524px;top:86px" width="18" height="18" viewBox="0 0 18 18"><circle cx="9" cy="9" r="7.6" fill="#f4f4f4" stroke="#707070" stroke-width="1.2"/><path d="M5.5 5.5l7 7M12.5 5.5l-7 7" stroke="#e82030" stroke-width="1.4"/></svg><div class="vsep" style="left:552px;top:84px"></div><svg class="a" style="left:559px;top:87px" width="16" height="16" viewBox="0 0 16 16"><rect x=".5" y="1.5" width="5.5" height="5.5" fill="#fff" stroke="#333"/><rect x=".5" y="9.5" width="5.5" height="5.5" fill="#fff" stroke="#333"/><path d="M1.8 12l1.4 1.6L5 10.8" stroke="#1a8a1a" fill="none" stroke-width="1.2"/><path d="M8 2.5h7M8 4.5h5M8 6.5h7M8 10.5h7M8 12.5h5M8 14.5h7" stroke="#1e961e" stroke-width="1"/></svg><svg class="a" style="left:585px;top:87px" width="16" height="16" viewBox="0 0 16 16"><rect x=".5" y="1.5" width="5.5" height="5.5" fill="#fff" stroke="#333"/><rect x=".5" y="9.5" width="5.5" height="5.5" fill="#fff" stroke="#333"/><path d="M8 2.5h7M8 4.5h5M8 6.5h7M8 10.5h7M8 12.5h5M8 14.5h7" stroke="#b0b0b0" stroke-width="1"/></svg><svg class="a" style="left:610px;top:87px" width="16" height="16" viewBox="0 0 16 16"><path d="M2 2.5h12L9.4 8.6V14H6.6V8.6z" fill="#a8a8a8"/><rect x="2" y="2" width="12" height="1.6" fill="#8c8c8c"/></svg><div class="vsep" style="left:632px;top:84px"></div><svg class="a" style="left:637px;top:88px" width="14" height="14" viewBox="0 0 14 14"><rect x="0" y="0" width="14" height="14" rx="1.5" fill="#6c6c6c"/><path d="M7 3L2.5 8H5v3.5h4V8h2.500z" fill="#b4b4b4"/></svg><svg class="a" style="left:663px;top:88px" width="14" height="14" viewBox="0 0 14 14"><rect x="0" y="0" width="14" height="14" rx="1.5" fill="#6c6c6c"/><path d="M7 11.500L2.5 6.5H5V3h4v3.500h2.500z" fill="#b4b4b4"/></svg><div class="vsep" style="left:684px;top:84px"></div><svg class="a" style="left:689px;top:88px" width="12" height="14" viewBox="0 0 12 14"><path d="M.5.500h7.500l3.500 3.500v9.500h-11z" fill="#f4f4f4" stroke="#a0a0a0"/><path d="M2.500 6.500h7M2.500 8.500h7M2.500 10.500h7" stroke="#b0b0b0"/></svg><div class="g" style="left:710px;top:89px;font-size:11.500px;letter-spacing:-0.25px">Критерии не заданы</div><div class="vl" style="left:1730px;top:84px;height:22px"></div><svg class="a" style="left:1736px;top:89px" width="14" height="14" viewBox="0 0 14 14"><defs><linearGradient id="rg" x1="0" y1="0" x2="0" y2="1"><stop offset="0" stop-color="#ff6a6a"/><stop offset="1" stop-color="#f00808"/></linearGradient></defs><rect x=".5" y=".5" width="13" height="13" rx="1" fill="url(#rg)" stroke="#7a3030" stroke-width=".8"/><path d="M4 4l6 6M10 4l-6 6" stroke="#fff" stroke-width="2.2"/></svg><div class="a" style="left:5px;top:108px;width:1732px;height:939px;background:#fff"></div><div class="a" style="left:5px;top:108px;width:1732px;height:36px;background:#f0f0f0"></div><div class="a" style="left:5px;top:143px;width:13px;height:181px;background:#f0f0f0"></div><div class="a" style="left:18px;top:144px;width:1719px;height:59px;background:#ebebff"></div><div class="a" style="left:18px;top:174px;width:1719px;height:29px;background:#f1f1ff"></div><div class="a" style="left:754px;top:126px;width:775px;height:17px;background:#c0dcc0"></div><div class="a" style="left:1530px;top:126px;width:207px;height:17px;background:#f0caa6"></div><div class="a" style="left:287px;top:144px;width:230px;height:29px;background:#0078d7;border:1px dotted #e89040"></div><div class="hl" style="left:5px;top:107px;width:1732px;background:#848484"></div><div class="hl" style="left:6px;top:108px;width:1731px;background:#fff"></div><div class="hl" style="left:585px;top:126px;width:1152px;background:#fff"></div><div class="hl" style="left:5px;top:143px;width:1732px;background:#848484"></div><div class="vl" style="left:5px;top:108px;height:36px;background:#848484"></div><div class="vl" style="left:6px;top:108px;height:35px;background:#fff"></div><div class="vl" style="left:17px;top:108px;height:36px;background:#848484"></div><div class="vl" style="left:18px;top:108px;height:35px;background:#fff"></div><div class="vl" style="left:49px;top:108px;height:36px;background:#848484"></div><div class="vl" style="left:50px;top:108px;height:35px;background:#fff"></div><div class="vl" style="left:118px;top:108px;height:36px;background:#848484"></div><div class="vl" style="left:119px;top:108px;height:35px;background:#fff"></div><div class="vl" style="left:156px;top:108px;height:36px;background:#848484"></div><div class="vl" style="left:157px;top:108px;height:35px;background:#fff"></div><div class="vl" style="left:210px;top:108px;height:36px;background:#848484"></div><div class="vl" style="left:211px;top:108px;height:35px;background:#fff"></div><div class="vl" style="left:286px;top:108px;height:36px;background:#848484"></div><div class="vl" style="left:287px;top:108px;height:35px;background:#fff"></div><div class="vl" style="left:517px;top:108px;height:36px;background:#848484"></div><div class="vl" style="left:518px;top:108px;height:35px;background:#fff"></div><div class="vl" style="left:584px;top:108px;height:36px;background:#848484"></div><div class="vl" style="left:585px;top:108px;height:35px;background:#fff"></div><div class="vl" style="left:665px;top:126px;height:18px;background:#848484"></div><div class="vl" style="left:666px;top:126px;height:17px;background:#fff"></div><div class="vl" style="left:753px;top:108px;height:36px;background:#848484"></div><div class="vl" style="left:754px;top:108px;height:35px;background:#fff"></div><div class="vl" style="left:842px;top:126px;height:18px;background:#848484"></div><div class="vl" style="left:843px;top:126px;height:17px;background:#fff"></div><div class="vl" style="left:935px;top:126px;height:18px;background:#848484"></div><div class="vl" style="left:936px;top:126px;height:17px;background:#fff"></div><div class="vl" style="left:1001px;top:126px;height:18px;background:#848484"></div><div class="vl" style="left:1002px;top:126px;height:17px;background:#fff"></div><div class="vl" style="left:1067px;top:126px;height:18px;background:#848484"></div><div class="vl" style="left:1068px;top:126px;height:17px;background:#fff"></div><div class="vl" style="left:1133px;top:126px;height:18px;background:#848484"></div><div class="vl" style="left:1134px;top:126px;height:17px;background:#fff"></div><div class="vl" style="left:1199px;top:126px;height:18px;background:#848484"></div><div class="vl" style="left:1200px;top:126px;height:17px;background:#fff"></div><div class="vl" style="left:1265px;top:126px;height:18px;background:#848484"></div><div class="vl" style="left:1266px;top:126px;height:17px;background:#fff"></div><div class="vl" style="left:1331px;top:126px;height:18px;background:#848484"></div><div class="vl" style="left:1332px;top:126px;height:17px;background:#fff"></div><div class="vl" style="left:1397px;top:126px;height:18px;background:#848484"></div><div class="vl" style="left:1398px;top:126px;height:17px;background:#fff"></div><div class="vl" style="left:1463px;top:126px;height:18px;background:#848484"></div><div class="vl" style="left:1464px;top:126px;height:17px;background:#fff"></div><div class="vl" style="left:1529px;top:126px;height:18px;background:#848484"></div><div class="vl" style="left:1530px;top:126px;height:17px;background:#fff"></div><div class="vl" style="left:1618px;top:126px;height:18px;background:#848484"></div><div class="vl" style="left:1619px;top:126px;height:17px;background:#fff"></div><div class="vl" style="left:1699px;top:126px;height:18px;background:#848484"></div><div class="vl" style="left:1700px;top:126px;height:17px;background:#fff"></div><div class="hl" style="left:584px;top:125px;width:1153px;background:#848484"></div><div class="hl" style="left:18px;top:173px;width:1719px;background:#c0c0c0"></div><div class="hl" style="left:5px;top:173px;width:206px;background:#848484"></div><div class="hl" style="left:18px;top:203px;width:1719px;background:#c0c0c0"></div><div class="hl" style="left:5px;top:203px;width:206px;background:#848484"></div><div class="hl" style="left:18px;top:233px;width:1719px;background:#c0c0c0"></div><div class="hl" style="left:5px;top:233px;width:206px;background:#848484"></div><div class="hl" style="left:18px;top:263px;width:1719px;background:#c0c0c0"></div><div class="hl" style="left:5px;top:263px;width:206px;background:#848484"></div><div class="hl" style="left:18px;top:293px;width:1719px;background:#c0c0c0"></div><div class="hl" style="left:5px;top:293px;width:206px;background:#848484"></div><div class="hl" style="left:18px;top:323px;width:1719px;background:#c0c0c0"></div><div class="hl" style="left:5px;top:323px;width:206px;background:#848484"></div><div class="vl" style="left:17px;top:144px;height:180px;background:#848484"></div><div class="vl" style="left:49px;top:144px;height:180px;background:#848484"></div><div class="vl" style="left:118px;top:144px;height:180px;background:#848484"></div><div class="vl" style="left:156px;top:144px;height:180px;background:#848484"></div><div class="vl" style="left:210px;top:144px;height:180px;background:#848484"></div><div class="vl" style="left:286px;top:144px;height:180px;background:#c0c0c0"></div><div class="vl" style="left:517px;top:144px;height:180px;background:#c0c0c0"></div><div class="vl" style="left:584px;top:144px;height:180px;background:#c0c0c0"></div><div class="vl" style="left:665px;top:144px;height:180px;background:#c0c0c0"></div><div class="vl" style="left:753px;top:144px;height:180px;background:#c0c0c0"></div><div class="vl" style="left:842px;top:144px;height:180px;background:#c0c0c0"></div><div class="vl" style="left:935px;top:144px;height:180px;background:#c0c0c0"></div><div class="vl" style="left:1001px;top:144px;height:180px;background:#c0c0c0"></div><div class="vl" style="left:1067px;top:144px;height:180px;background:#c0c0c0"></div><div class="vl" style="left:1133px;top:144px;height:180px;background:#c0c0c0"></div><div class="vl" style="left:1199px;top:144px;height:180px;background:#c0c0c0"></div><div class="vl" style="left:1265px;top:144px;height:180px;background:#c0c0c0"></div><div class="vl" style="left:1331px;top:144px;height:180px;background:#c0c0c0"></div><div class="vl" style="left:1397px;top:144px;height:180px;background:#c0c0c0"></div><div class="vl" style="left:1463px;top:144px;height:180px;background:#c0c0c0"></div><div class="vl" style="left:1529px;top:144px;height:180px;background:#c0c0c0"></div><div class="vl" style="left:1618px;top:144px;height:180px;background:#c0c0c0"></div><div class="vl" style="left:1699px;top:144px;height:180px;background:#c0c0c0"></div><div class="vl" style="left:5px;top:144px;height:180px;background:#848484"></div><div class="g" style="left:21px;top:120px;">Тип</div><div class="g" style="left:52px;top:120px;">Утверждено</div><div class="g" style="left:121px;top:120px;font-weight:bold;transform:scaleX(1.120);transform-origin:0 0">№п/п</div><div class="g" style="left:159px;top:113px;">Связь с
ВОР</div><div class="g" style="left:213px;top:120px;">Обоснование</div><div class="g" style="left:289px;top:120px;">Наименование</div><div class="g" style="left:520px;top:113px;">Ед.изм.
(краткая)</div><div class="g" style="left:587px;top:111px;">Количество</div><div class="g" style="left:756px;top:111px;">Уровень цен</div><div class="g" style="left:587px;top:129px;">Всего с коэф.</div><div class="g" style="left:668px;top:129px;">Норма расхода</div><div class="g" style="left:756px;top:129px;">Всего</div><div class="g" style="left:845px;top:129px;">ПЗ</div><div class="g" style="left:938px;top:129px;">ОЗП</div><div class="g" style="left:1004px;top:129px;">ЭММ</div><div class="g" style="left:1070px;top:129px;">ЗПМ</div><div class="g" style="left:1136px;top:129px;">СтМат</div><div class="g" style="left:1202px;top:129px;">Прочие</div><div class="g" style="left:1268px;top:129px;">НР</div><div class="g" style="left:1334px;top:129px;">СП</div><div class="g" style="left:1400px;top:129px;">ТрудСтр</div><div class="g" style="left:1466px;top:129px;">ТрудМаш</div><div class="g" style="left:1532px;top:129px;">Всего</div><div class="g" style="left:1621px;top:129px;">ПЗ</div><div class="g" style="left:1702px;top:129px;">ОЗП</div><div class="a" style="left:9px;top:153px;width:0;height:0;border:5.500px solid transparent;border-left:6px solid #000;border-right:0"></div><div class="cb" style="left:79px;top:153px"></div><div class="cb" style="left:79px;top:183px"></div><div class="cb" style="left:79px;top:213px"></div><div class="cb" style="left:79px;top:243px"></div><div class="cb" style="left:79px;top:273px"></div><div class="cb" style="left:79px;top:303px"></div><div class="g" style="left:121px;top:146px;color:#0000e8">ЛС1</div><div class="g" style="left:121px;top:176px;color:#0000e8;width:34px;overflow:hidden">ЛС1.Р1</div><div class="g" style="left:212px;top:145px;font-weight:bold;color:#0000f0;transform:scaleX(1.09);transform-origin:0 0;font-size:11px">Новая
локальн</div><div class="g" style="left:212px;top:175px;font-weight:bold;color:#0000f0;transform:scaleX(1.09);transform-origin:0 0;font-size:11px">Новый
раздел</div><div class="g" style="left:289px;top:148px;font-weight:bold;color:#fff;transform:scaleX(1.240);transform-origin:0 0;font-size:11px">Новая локальная смета</div><div class="g" style="left:305px;top:177px;font-weight:bold;color:#1c1ce0;transform:scaleX(1.183);transform-origin:0 0;font-size:11px">Раздел №1</div><svg class="a" style="left:262px;top:144px" width="24" height="23" viewBox="0 0 24 23"><defs><linearGradient id="bk" x1="0" y1="0" x2="1" y2="1"><stop offset="0" stop-color="#3cc868"/><stop offset=".5" stop-color="#7adc98"/><stop offset="1" stop-color="#48c474"/></linearGradient></defs><path d="M.500 13.500v3.200l14.800 5 1.200-2.200L22.600 7l.6-1.800-8.200 6z" fill="#e4ecf8" stroke="#4a9a80" stroke-width=".7" stroke-dasharray="1.600 .8"/><path d="M1 15.200l14.300 4.800" stroke="#7aa0e0" stroke-width=".9"/><path d="M8.800 12.600L23.300 5l-6.900 14.300z" fill="#fff"/><path d="M.500 13.500L11 3 23.500.300 13.500 11 8.800 12.600 5 14.800z" fill="url(#bk)"/><path d="M17 19l6-13" stroke="#7aa0e0" stroke-width=".8"/><text x="9.500" y="14.500" font-size="6" font-weight="bold" font-family="Liberation Sans" fill="#0a200a" transform="rotate(24 9.500 14.500)">ЛС</text></svg><svg class="a" style="left:262px;top:175px" width="24" height="23" viewBox="0 0 24 23"><defs><linearGradient id="gd" x1="0" y1="0" x2="1" y2="1"><stop offset="0" stop-color="#c8f4c8"/><stop offset="1" stop-color="#78e088"/></linearGradient></defs><rect x="7.800" y=".800" width="15.400" height="19.400" fill="#fbf8a4" stroke="#b4b094" stroke-width=".8"/><path d="M16.500 4.500h5M16.500 6.500h5M16.500 8.500h5" stroke="#e0d468" stroke-width=".8"/><path d="M16.500 10.500h5M16.500 12.500h5M16.500 14.500h5M16.500 16.500h5" stroke="#b8a43c" stroke-width=".9"/><path d="M.700 2.800h9l6.800 6.800v11.900H.700z" fill="url(#gd)" stroke="#909898" stroke-width=".9"/><path d="M9.700 2.800v6.800h6.800" fill="#ecfaec" stroke="#909898" stroke-width=".8"/><rect x="6.400" y="11.300" width="8.400" height="8" fill="#fff" stroke="#8c8c8c" stroke-width=".7"/><text x="10.600" y="18.300" font-size="8" font-weight="bold" font-family="Liberation Sans" fill="#0a280a" text-anchor="middle">P</text></svg><div class="g" style="left:121px;top:206px;">1</div><div class="g" style="left:213px;top:206px;">3.10-1-1</div><div class="g" style="left:289px;top:206px;letter-spacing:0.14px">Укрупнительная сборка и установка</div><div class="g" style="left:289px;top:219px;letter-spacing:0.09px">конструкций арок и ферм сегментных</div><div class="num" style="left:753px;width:88px;top:206px">837,1</div><div class="num" style="left:846px;width:88px;top:206px">755 623,97</div><div class="num" style="left:912px;width:88px;top:206px">429 916,73</div><div class="num" style="left:978px;width:88px;top:206px">54 080,98</div><div class="num" style="left:1044px;width:88px;top:206px">13 964,9</div><div class="num" style="left:1110px;width:88px;top:206px">271 626,26</div><div class="num" style="left:1176px;width:88px;top:206px">0</div><div class="num" style="left:1242px;width:88px;top:206px">382 625,89</div><div class="num" style="left:1308px;width:88px;top:206px">176 265,86</div><div class="num" style="left:1374px;width:88px;top:206px">907,5396</div><div class="num" style="left:1440px;width:88px;top:206px">0</div><div class="num" style="left:1529px;width:88px;top:206px">1 063,53</div><div class="num" style="left:1610px;width:88px;top:206px">1 063,53</div><svg class="a" style="left:272px;top:218px" width="13" height="14" viewBox="0 0 13 14"><rect x=".9" y="1.700" width="4.400" height="11" rx="2.200" fill="#fff" stroke="#4a4a4a" stroke-width="1.700"/><path d="M1 6v4.500" stroke="#3c3c3c" stroke-width="1.900"/><path d="M5.300 6v5" stroke="#4a4a4a" stroke-width="1.900"/><rect x="6" y="1" width="6" height="6" rx=".5" fill="#20a010"/><path d="M7.300 3.600l1.300 1.500 2.100-2.400" stroke="#fff" fill="none" stroke-width="1.100"/></svg><div class="g" style="left:121px;top:236px;">2</div><div class="g" style="left:213px;top:236px;">3.11-1-1</div><div class="g" style="left:289px;top:236px;letter-spacing:0.12px">Уплотнение грунта гравием</div><div class="num" style="left:753px;width:88px;top:236px">16,39</div><div class="num" style="left:846px;width:88px;top:236px">1 387</div><div class="num" style="left:912px;width:88px;top:236px">210,93</div><div class="num" style="left:978px;width:88px;top:236px">84,92</div><div class="num" style="left:1044px;width:88px;top:236px">33,04</div><div class="num" style="left:1110px;width:88px;top:236px">1 091,15</div><div class="num" style="left:1176px;width:88px;top:236px">0</div><div class="num" style="left:1242px;width:88px;top:236px">187,73</div><div class="num" style="left:1308px;width:88px;top:236px">86,48</div><div class="num" style="left:1374px;width:88px;top:236px">0,499105</div><div class="num" style="left:1440px;width:88px;top:236px">0</div><div class="num" style="left:1529px;width:88px;top:236px">739,17</div><div class="num" style="left:1610px;width:88px;top:236px">739,17</div><svg class="a" style="left:272px;top:248px" width="13" height="14" viewBox="0 0 13 14"><rect x=".9" y="1.700" width="4.400" height="11" rx="2.200" fill="#fff" stroke="#4a4a4a" stroke-width="1.700"/><path d="M1 6v4.500" stroke="#3c3c3c" stroke-width="1.900"/><path d="M5.300 6v5" stroke="#4a4a4a" stroke-width="1.900"/><rect x="6" y="1" width="6" height="6" rx=".5" fill="#20a010"/><path d="M7.300 3.600l1.300 1.500 2.100-2.400" stroke="#fff" fill="none" stroke-width="1.100"/></svg><div class="g" style="left:121px;top:266px;">3</div><div class="g" style="left:213px;top:266px;">3.5-1-1</div><div class="g" style="left:289px;top:266px;letter-spacing:0.07px">Погружение дизель-молотом на</div><div class="g" style="left:289px;top:279px;letter-spacing:0.19px">экскаваторе железобетонных свай</div><div class="num" style="left:753px;width:88px;top:266px">03,58</div><div class="num" style="left:846px;width:88px;top:266px">36 782,9</div><div class="num" style="left:912px;width:88px;top:266px">7 061,98</div><div class="num" style="left:978px;width:88px;top:266px">28 160,03</div><div class="num" style="left:1044px;width:88px;top:266px">5 531,71</div><div class="num" style="left:1110px;width:88px;top:266px">1 560,89</div><div class="num" style="left:1176px;width:88px;top:266px">0</div><div class="num" style="left:1242px;width:88px;top:266px">8 615,62</div><div class="num" style="left:1308px;width:88px;top:266px">5 367,1</div><div class="num" style="left:1374px;width:88px;top:266px">14,90928</div><div class="num" style="left:1440px;width:88px;top:266px">0</div><div class="num" style="left:1529px;width:88px;top:266px">662,34</div><div class="num" style="left:1610px;width:88px;top:266px">662,34</div><svg class="a" style="left:272px;top:278px" width="13" height="14" viewBox="0 0 13 14"><rect x=".9" y="1.700" width="4.400" height="11" rx="2.200" fill="#fff" stroke="#4a4a4a" stroke-width="1.700"/><path d="M1 6v4.500" stroke="#3c3c3c" stroke-width="1.900"/><path d="M5.300 6v5" stroke="#4a4a4a" stroke-width="1.900"/><rect x="6" y="1" width="6" height="6" rx=".5" fill="#20a010"/><path d="M7.300 3.600l1.300 1.500 2.100-2.400" stroke="#fff" fill="none" stroke-width="1.100"/></svg><div class="g" style="left:121px;top:296px;">4</div><div class="g" style="left:213px;top:296px;">3.7-1-1</div><div class="g" style="left:289px;top:296px;letter-spacing:0.06px">Укладка блоков и плит ленточных</div><div class="g" style="left:289px;top:309px;letter-spacing:-0.04px">фундаментов при глубине котлована</div><div class="num" style="left:753px;width:88px;top:296px">53,28</div><div class="num" style="left:846px;width:88px;top:296px">1 430,54</div><div class="num" style="left:912px;width:88px;top:296px">1 264,4</div><div class="num" style="left:978px;width:88px;top:296px">166,14</div><div class="num" style="left:1044px;width:88px;top:296px">57,63</div><div class="num" style="left:1110px;width:88px;top:296px">0</div><div class="num" style="left:1176px;width:88px;top:296px">0</div><div class="num" style="left:1242px;width:88px;top:296px">1 605,79</div><div class="num" style="left:1308px;width:88px;top:296px">720,71</div><div class="num" style="left:1374px;width:88px;top:296px">2,834896</div><div class="num" style="left:1440px;width:88px;top:296px">0</div><div class="num" style="left:1529px;width:88px;top:296px">1 050,75</div><div class="num" style="left:1610px;width:88px;top:296px">1 050,75</div><div class="num" style="left:1648px;width:88px;top:296px">7</div><svg class="a" style="left:272px;top:308px" width="13" height="14" viewBox="0 0 13 14"><rect x=".9" y="1.700" width="4.400" height="11" rx="2.200" fill="#fff" stroke="#4a4a4a" stroke-width="1.700"/><path d="M1 6v4.500" stroke="#3c3c3c" stroke-width="1.900"/><path d="M5.300 6v5" stroke="#4a4a4a" stroke-width="1.900"/><rect x="6" y="1" width="6" height="6" rx=".5" fill="#20a010"/><path d="M7.300 3.600l1.300 1.500 2.100-2.400" stroke="#fff" fill="none" stroke-width="1.100"/></svg><div class="a" style="left:1737px;top:108px;width:17px;height:939px;background:#f0f0f0"></div><div class="a" style="left:1737px;top:125px;width:15px;height:494px;background:#cdcdcd"></div><svg class="a" style="left:1740px;top:113px" width="9" height="8" viewBox="0 0 9 8"><path d="M.8 6L4.500 2l3.700 4" fill="none" stroke="#555" stroke-width="2.200"/></svg><svg class="a" style="left:1740px;top:1035px" width="9" height="8" viewBox="0 0 9 8"><path d="M.8 2L4.500 6l3.700-4" fill="none" stroke="#555" stroke-width="2.200"/></svg><div class="a" style="left:1752px;top:108px;width:2px;height:939px;background:#fff"></div><div class="a" style="left:5px;top:1047px;width:1749px;height:17px;background:#f0f0f0"></div><div class="a" style="left:23px;top:1048px;width:17px;height:15px;background:#cdcdcd"></div><svg class="a" style="left:10px;top:1051px" width="8" height="9" viewBox="0 0 8 9"><path d="M6 .8L2 4.500l4 3.700" fill="none" stroke="#555" stroke-width="2.200"/></svg><svg class="a" style="left:1724px;top:1051px" width="8" height="9" viewBox="0 0 8 9"><path d="M2 .8l4 3.700-4 3.700" fill="none" stroke="#555" stroke-width="2.200"/></svg><div class="vl" style="left:5px;top:108px;height:956px;background:#8c8c8c"></div><div class="a" style="left:5px;top:1064px;width:1749px;height:1px;background:#fff"></div><div class="a" style="left:77px;top:1065px;width:1680px;height:1px;background:#696969"></div><div class="a" style="left:77px;top:1066px;width:1680px;height:1px;background:#a8a8a8"></div><div class="tab" style="left:78px;top:1067px;width:106px;height:18px;padding-top:3px;letter-spacing:-0.07px;text-align:left;padding-left:3.2px">Сокращенный вид</div><div class="tab" style="left:186px;top:1067px;width:67px;height:18px;padding-top:3px;letter-spacing:0.09px;text-align:left;padding-left:2.9px">Вид строки</div><div class="tab" style="left:255px;top:1067px;width:100px;height:18px;padding-top:3px;letter-spacing:0.13px;text-align:left;padding-left:3.1px">Объектная смета</div><div class="tab" style="left:357px;top:1067px;width:85px;height:18px;padding-top:3px;letter-spacing:0.06px;text-align:left;padding-left:3.1px">Предпросмотр</div><div class="tab" style="left:3px;top:1065px;width:75px;height:22px;padding-top:7px;letter-spacing:-0.06px;text-align:left;padding-left:5.300px">Полный вид</div><div class="sp" style="left:4px;width:85px"></div><div class="sp" style="left:92px;width:297px"></div><div class="sp" style="left:392px;width:1295px"></div><div class="sp" style="left:1690px;width:32px"></div><div class="sp" style="left:1725px;width:31px"></div><div class="t" style="left:398px;top:1096px;letter-spacing:-0.09px">ИТОГО (руб)</div><div class="t" style="left:474px;top:1096px;letter-spacing:-0.4px">По ЛС: 1 403 410,35</div><div class="t" style="left:593px;top:1096px;letter-spacing:-0.3px">По объекту: 1 403 410,35</div><div class="t" style="left:1732px;top:1096px;font-size:11.500px;letter-spacing:-.900px">RU</div><svg class="a" style="left:1696px;top:1093px" width="20" height="20" viewBox="0 0 20 20"><circle cx="10" cy="10" r="7.500" fill="#9c9c9c"/><rect x="9" y="8.500" width="2.200" height="6" fill="#e8e8e8"/><rect x="9" y="5" width="2.200" height="2.200" fill="#e8e8e8"/><path d="M3 3l14 15" stroke="#f01020" stroke-width="1.800"/></svg><div class="a" style="left:2px;top:1089px;width:1755px;height:1px;background:#fff"></div><div class="menu" style="left:472px;top:169px;width:341px;height:437px"><div class="mi" style="top:2px"><div class="ic"><svg width="16" height="16" viewBox="0 0 16 16"><path d="M3.500 13c3 2.800 9 1.500 9.500-5" stroke="#98b4bc" stroke-width="1.700" fill="none"/><path d="M1.300 14.200l3.200-2.700" stroke="#d88828" stroke-width="2"/><path d="M5.500 4.500l8 9.500" stroke="#d88828" stroke-width="1.600"/><path d="M3.300 6.200l4.200-3.600" stroke="#4c5c60" stroke-width="2.500" stroke-linecap="round"/><rect x="9" y="0" width="7" height="7" rx="1" fill="#f08a1c"/><circle cx="12.5" cy="3.5" r="1.3" fill="#fff"/><path d="M12.5 .8v5.4M9.8 3.5h5.4M10.6 1.6l3.8 3.8M14.4 1.6l-3.8 3.8" stroke="#ffe0b0" stroke-width=".5"/></svg></div><span class="l" style="letter-spacing:-0.04px">Добавить расценку</span><span class="s" style="letter-spacing:0.08px;margin-right:-0.08px">Shift+Ins</span></div><div class="mi" style="top:23px"><div class="ic"><svg width="16" height="16" viewBox="0 0 16 16"><g fill="#f47c0c" stroke="#c05000" stroke-width=".45"><rect x=".3" y="12.700" width="5" height="2.600" rx="1.200"/><rect x="5.500" y="12.700" width="5" height="2.600" rx="1.200"/><rect x="10.700" y="12.700" width="5" height="2.600" rx="1.200"/><rect x="2.900" y="9.900" width="5" height="2.600" rx="1.200"/><rect x="8.100" y="9.900" width="5" height="2.600" rx="1.200"/><rect x="5.500" y="7.100" width="5" height="2.600" rx="1.200"/></g><path d="M1.300 13.400h3M6.500 13.400h3M11.700 13.400h3M3.900 10.600h3M9.100 10.600h3M6.500 7.800h3" stroke="#ffb060" stroke-width=".6"/><rect x="9" y="0" width="7" height="7" rx="1" fill="#f08a1c"/><circle cx="12.5" cy="3.5" r="1.3" fill="#fff"/><path d="M12.5 .8v5.4M9.8 3.5h5.4M10.6 1.6l3.8 3.8M14.4 1.6l-3.8 3.8" stroke="#ffe0b0" stroke-width=".5"/></svg></div><span class="l" style="letter-spacing:-0.05px">Добавить ресурс</span><span class="s" style="letter-spacing:-0.21px;margin-right:0.21px">Ins</span></div><div class="mi" style="top:44px"><div class="ic"><svg width="16" height="16" viewBox="0 0 16 16"><rect x="1" y="3" width="12" height="4" fill="#5a9a5a" stroke="#3a7a3a" stroke-width=".6"/><rect x="2" y="7" width="10" height="8" fill="#fbf2c0" stroke="#5a7a4a" stroke-width=".8"/><rect x="2" y="7" width="10" height="3" fill="#78b078"/><rect x="5" y="11.5" width="4" height="1.4" fill="#333"/><rect x="9" y="0" width="7" height="7" rx="1" fill="#f08a1c"/><circle cx="12.5" cy="3.5" r="1.3" fill="#fff"/><path d="M12.5 .8v5.4M9.8 3.5h5.4M10.6 1.6l3.8 3.8M14.4 1.6l-3.8 3.8" stroke="#ffe0b0" stroke-width=".5"/></svg></div><span class="l" style="letter-spacing:0.09px">Добавить подчиненную строку</span><span class="s" style="letter-spacing:0.28px;margin-right:-0.28px">Alt+Ins</span></div><div class="mi" style="top:65px"><div class="ic"><svg width="16" height="16" viewBox="0 0 16 16"><path d="M1.5 3.5h11a1 1 0 0 1 1 1v6a1 1 0 0 1-1 1H7l-3 3.5v-3.5H1.5a1 1 0 0 1-1-1v-6a1 1 0 0 1 1-1z" fill="#eef8fc" stroke="#90a8b0" stroke-width=".9"/><rect x="9" y="0" width="7" height="7" rx="1" fill="#f08a1c"/><circle cx="12.5" cy="3.5" r="1.3" fill="#fff"/><path d="M12.5 .8v5.4M9.8 3.5h5.4M10.6 1.6l3.8 3.8M14.4 1.6l-3.8 3.8" stroke="#ffe0b0" stroke-width=".5"/></svg></div><span class="l" style="letter-spacing:0.12px">Добавить строку-комментарий</span><span class="s" style="letter-spacing:0.13px;margin-right:-0.13px">Alt+R</span></div><div class="mi" style="top:86px"><div class="ic"><svg width="16" height="16" viewBox="0 0 16 16"><rect x="5" y="4" width="10.5" height="7" fill="#e82828" stroke="#a81818" stroke-width=".5"/><path d="M5 6H2L0 8.5v3h5z" fill="#b0b8c0" stroke="#606870" stroke-width=".5"/><rect x="0" y="11" width="15.5" height="1.4" fill="#444"/><circle cx="3" cy="13" r="1.8" fill="#222"/><circle cx="7" cy="13" r="1.8" fill="#222"/><circle cx="12.5" cy="13" r="1.8" fill="#222"/></svg></div><span class="l" style="letter-spacing:0.01px">Добавить дополнительную перевозку</span><span class="s" style="letter-spacing:0.14px;margin-right:-0.14px">Shift+Ctrl+Ins</span></div><div class="mi" style="top:107px"><div class="ic"><svg width="16" height="16" viewBox="0 0 16 16"><path d="M3 3.200l10 9.600M13 3.200L3 12.800" stroke="#f04030" stroke-width="1.800" stroke-linecap="round"/></svg></div><span class="l" style="letter-spacing:-0.19px">Удалить</span><span class="s" style="letter-spacing:0.1px;margin-right:-0.1px">Ctrl+Del</span></div><div class="msep" style="top:132px"></div><div class="mi" style="top:136px"><div class="ic"><svg width="16" height="16" viewBox="0 0 16 16"><path d="M1.5 14.5L7 9" stroke="#d07020" stroke-width="2.6" stroke-linecap="round"/><circle cx="10" cy="6" r="4.6" fill="#d8ecff" stroke="#e8963c" stroke-width="1.4"/><circle cx="10" cy="6" r="3" fill="#b8d8f8" opacity=".7"/></svg></div><span class="l" style="letter-spacing:0.26px">Поиск по обоснованию</span><span class="s" style="letter-spacing:0.0px;margin-right:-0.0px">Ctrl+Enter</span></div><div class="mi" style="top:157px"><span class="l" style="letter-spacing:0.21px">Поиск по наименованию</span><span class="s" style="letter-spacing:0.03px;margin-right:-0.03px">Shift+Enter</span></div><div class="mi" style="top:178px"><span class="l" style="letter-spacing:0.04px">Выбор по классификатору...</span><span class="s" style="letter-spacing:0.12px;margin-right:-0.12px">Alt+Enter</span></div><div class="mi" style="top:199px"><span class="l" style="letter-spacing:-0.01px">Проверка сметы...</span></div><div class="mi" style="top:220px"><span class="l" style="letter-spacing:-0.12px">Замена ресурсов...</span></div><div class="mi" style="top:241px"><span class="l" style="letter-spacing:0.05px">Укрупнение расценок...</span></div><div class="msep" style="top:266px"></div><div class="mi sel" style="top:270px"><span class="l" style="letter-spacing:-0.17px">Действия</span><div class="arr" style="border-left-color:#fff"></div></div><div class="mi" style="top:291px"><span class="l" style="letter-spacing:-0.46px">Вид</span><div class="arr" style="border-left-color:#000"></div></div><div class="mi" style="top:312px"><span class="l" style="letter-spacing:-0.08px">Закладки</span><div class="arr" style="border-left-color:#000"></div></div><div class="mi" style="top:333px"><span class="l" style="letter-spacing:0.41px">Итоги</span><div class="arr" style="border-left-color:#000"></div></div><div class="mi" style="top:354px"><span class="l" style="letter-spacing:-0.07px">Структура</span><div class="arr" style="border-left-color:#000"></div></div><div class="msep" style="top:379px"></div><div class="mi" style="top:383px"><span class="l" style="letter-spacing:-0.05px">Параметры...</span><span class="s" style="letter-spacing:-0.9px;margin-right:0.9px">F3</span></div><div class="msep" style="top:408px"></div><div class="mi" style="top:412px"><span class="l" style="letter-spacing:-0.01px">Настроить это меню...</span></div></div><div class="menu" style="left:807px;top:437px;width:397px;height:700px"><div class="mi" style="top:2px"><div class="ic"><svg width="16" height="16" viewBox="0 0 16 16"><path d="M4 .5l5.5 11M12 .5L6.5 11.5" stroke="#a0a8a8" stroke-width="1.3"/><circle cx="4.6" cy="13" r="2" fill="none" stroke="#1a9aa0" stroke-width="1.3"/><circle cx="11.4" cy="13" r="2" fill="none" stroke="#1a9aa0" stroke-width="1.3"/></svg></div><span class="l" style="letter-spacing:-0.28px">Вырезать</span><span class="s" style="letter-spacing:0.18px;margin-right:-0.18px">Ctrl+X</span></div><div class="mi" style="top:23px"><div class="ic"><svg width="16" height="16" viewBox="0 0 16 16"><rect x="1" y="1.5" width="8.5" height="10.5" fill="#e4f4f6" stroke="#6aa8b0" stroke-width=".9"/><rect x="6" y="4.5" width="8.5" height="10.5" fill="#e4f4f6" stroke="#6aa8b0" stroke-width=".9"/><path d="M7.5 7.5h5.5M7.5 9.5h5.5M7.5 11.5h5.5M2.5 4.5h3" stroke="#8ab8c0" stroke-width=".8"/></svg></div><span class="l" style="letter-spacing:0.12px">Копировать</span><span class="s" style="letter-spacing:0.21px;margin-right:-0.21px">Ctrl+C</span></div><div class="mi dis" style="top:44px"><div class="ic"><svg width="16" height="16" viewBox="0 0 16 16"><rect x="0.5" y="1" width="15" height="14.5" rx="2" fill="#9c9c9c"/><rect x="4" y="0" width="8" height="3" rx="1" fill="#9c9c9c"/></svg></div><span class="l" style="letter-spacing:-0.35px">Вставить</span><span class="s" style="letter-spacing:0.18px;margin-right:-0.18px">Ctrl+V</span></div><div class="msep" style="top:69px"></div><div class="mi" style="top:73px"><span class="l" style="letter-spacing:-0.06px">Распространить ценовые показатели на выделенные строки</span></div><div class="mi" style="top:94px"><span class="l" style="letter-spacing:-0.07px">Пересчет цены из КА с учетом индекса ФИ...</span><span class="s" style="letter-spacing:0.17px;margin-right:-0.17px">Shift+Ctrl+K</span></div><div class="msep" style="top:119px"></div><div class="mi" style="top:123px"><span class="l" style="letter-spacing:-0.12px">Вставить позиции из прайса...</span><span class="s" style="letter-spacing:0.17px;margin-right:-0.17px">Shift+Ctrl+P</span></div><div class="msep" style="top:148px"></div><div class="mi" style="top:152px"><span class="l" style="letter-spacing:-0.18px">Импорт сметы из Excel...</span></div><div class="msep" style="top:177px"></div><div class="mi" style="top:181px"><span class="l" style="letter-spacing:-0.01px">Перенумерация строк...</span></div><div class="mi sel" style="top:202px"><span class="l" style="letter-spacing:-0.05px">Пересчитать смету</span></div><div class="mi" style="top:223px"><span class="l" style="letter-spacing:0.09px">Рассчитать по макс\мин стоимости...</span></div><div class="mi" style="top:244px"><span class="l" style="letter-spacing:-0.24px">Сформировать РТМ (прим. для ФЕР/ТЕР)...</span></div><div class="msep" style="top:269px"></div><div class="mi" style="top:273px"><span class="l" style="letter-spacing:-0.07px">Создать ресурсный расчёт...</span><span class="s" style="letter-spacing:0.11px;margin-right:-0.11px">Shift+Ctrl+R</span></div><div class="mi" style="top:294px"><span class="l" style="letter-spacing:-0.3px">Создать М29...</span><span class="s" style="letter-spacing:0.34px;margin-right:-0.34px">Shift+Ctrl+M</span></div><div class="msep" style="top:319px"></div><div class="mi" style="top:323px"><span class="l" style="letter-spacing:-0.07px">Назначить начисления на выделенную часть...</span><span class="s" style="letter-spacing:0.18px;margin-right:-0.18px">Ctrl+Y</span></div><div class="mi" style="top:344px"><span class="l" style="letter-spacing:-0.09px">Назначить индексы на выделенную часть...</span><span class="s" style="letter-spacing:0.26px;margin-right:-0.26px">Ctrl+I</span></div><div class="mi" style="top:365px"><div class="a" style="left:1px;top:1px;width:18px;height:19px;border:1px solid;border-color:#a4a4a4 #fff #fff #a4a4a4;background:#f8f8f8"></div><svg class="a" style="left:5px;top:6px" width="10" height="10" viewBox="0 0 10 10"><path d="M1.600 4.800L4 7.400l4-5.400" fill="none" stroke="#000" stroke-width="2.200"/></svg><span class="l" style="letter-spacing:-0.05px">Подсветить строки без назначенных индексов</span><span class="s" style="letter-spacing:0.26px;margin-right:-0.26px">Shift+Ctrl+I</span></div><div class="mi" style="top:386px"><div class="a" style="left:1px;top:1px;width:18px;height:19px;border:1px solid;border-color:#a4a4a4 #fff #fff #a4a4a4;background:#f8f8f8"></div><svg class="a" style="left:5px;top:6px" width="10" height="10" viewBox="0 0 10 10"><path d="M1.600 4.800L4 7.400l4-5.400" fill="none" stroke="#000" stroke-width="2.200"/></svg><span class="l" style="letter-spacing:-0.01px">Подсветить строки без назначенных текущих цен</span><span class="s" style="letter-spacing:0.17px;margin-right:-0.17px">Shift+Ctrl+T</span></div><div class="mi" style="top:407px"><span class="l" style="letter-spacing:0.02px">Подсветить строки без текущих цен, назначенных вручную</span></div><div class="mi" style="top:428px"><span class="l" style="letter-spacing:0.01px">Очистить индексы</span></div><div class="msep" style="top:453px"></div><div class="mi dis" style="top:457px"><span class="l" style="letter-spacing:0.05px">Исключить строку из расчета сметы</span><span class="s" style="letter-spacing:0.21px;margin-right:-0.21px">Ctrl+D</span></div><div class="mi dis" style="top:478px"><div class="ic"><svg width="15" height="15" viewBox="0 0 15 15"><path d="M5 1.200h5l3.800 3.800v5l-3.800 3.800h-5L1.200 10V5z" fill="#f0f0f0" stroke="#a6a6a6" stroke-width="2.200" stroke-linejoin="round"/><path d="M3.800 3.500L7.500 8.300l3.700-4.800M7.500 8.300V13" stroke="#a6a6a6" stroke-width="2" fill="none"/></svg></div><span class="l" style="letter-spacing:0.02px">Исключить ресурс из расчета объемов ресурсов</span></div><div class="msep" style="top:503px"></div><div class="mi dis" style="top:507px"><span class="l" style="letter-spacing:-0.07px">Материал заказчика</span><span class="s" style="letter-spacing:0.55px;margin-right:-0.55px">Ctrl+M</span></div><div class="mi dis" style="top:528px"><span class="l" style="letter-spacing:0.04px">Оборудование</span><span class="s" style="letter-spacing:0.17px;margin-right:-0.17px">Ctrl+K</span></div><div class="mi" style="top:549px"><span class="l" style="letter-spacing:0.02px">Изменить тип строки...</span></div><div class="mi" style="top:570px"><span class="l" style="letter-spacing:0.07px">Обнулить объемы</span></div><div class="mi" style="top:591px"><span class="l" style="letter-spacing:-0.09px">Перевызвать формулы</span></div><div class="mi" style="top:612px"><span class="l" style="letter-spacing:-0.14px">Перевызвать все ресурсы и добавить их в цены</span><span class="s" style="letter-spacing:0.24px;margin-right:-0.24px">Ctrl+Alt+R</span></div><div class="mi" style="top:633px"><span class="l" style="letter-spacing:-0.12px">Найти и заменить...</span><span class="s" style="letter-spacing:0.31px;margin-right:-0.31px">Shift+Ctrl+H</span></div><div class="msep" style="top:658px"></div><div class="mi" style="top:662px"><span class="l" style="letter-spacing:-0.03px">Применить поправку на выделенную часть...</span><span class="s" style="letter-spacing:0.44px;margin-right:-0.44px">Ctrl+N</span></div></div><div class="a" style="left:0;top:1117px;width:1760px;height:2px;background:#7e7e7e"></div><svg class="a" style="left:0;top:0;pointer-events:none" width="1760" height="1119" viewBox="0 0 1760 1119"><path d="M340.0 171.5L463.9 439.7" stroke="#ed1c24" stroke-width="3.0" fill="none"/><path d="M470.6 454.2L455.8 441.2L470.3 434.5z" fill="#ed1c24"/><path d="M807.0 448.8L991.0 627.4" stroke="#ed1c24" stroke-width="3.0" fill="none"/><path d="M1002.5 638.5L984.0 631.7L995.2 620.2z" fill="#ed1c24"/></svg>
</body></html>
